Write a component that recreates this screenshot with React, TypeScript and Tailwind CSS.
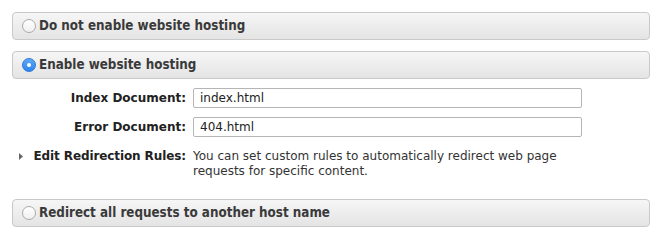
import React from "react";

function Radio({ checked }: { checked?: boolean }) {
  if (checked) {
    return (
      <span className="w-[14px] h-[14px] rounded-full bg-gradient-to-b from-[#5fa9f6] to-[#2b84ee] border border-[#2a7ad8] flex items-center justify-center shrink-0">
        <span className="w-[4px] h-[4px] rounded-full bg-white" />
      </span>
    );
  }
  return (
    <span className="w-[14px] h-[14px] rounded-full bg-gradient-to-b from-[#ffffff] to-[#f0f0f0] border border-[#a9a9a9] shrink-0" />
  );
}

function Bar({ label, checked }: { label: string; checked?: boolean }) {
  return (
    <div className="h-[28px] rounded-[4px] border border-[#c9c9c9] bg-gradient-to-b from-[#f6f6f6] to-[#e4e4e4] flex items-center pl-[9px] gap-[3px]">
      <Radio checked={checked} />
      <span className="text-[13.3px] font-bold text-[#3a3a3a] leading-none font-['DejaVu_Sans_Condensed',sans-serif]">{label}</span>
    </div>
  );
}

export default function App() {
  return (
    <div className="w-[655px] h-[251px] bg-white pt-[12px] pl-[12px] pr-[5px] font-['DejaVu_Sans',Verdana,sans-serif]">
      <Bar label="Do not enable website hosting" />
      <div className="mt-[11px]">
        <Bar label="Enable website hosting" checked />
      </div>
      <div className="mt-[9px] flex flex-col">
        <div className="flex items-center h-[20px]">
          <div className="w-[174px] text-right text-[12px] font-bold text-[#222]">Index Document:</div>
          <div className="ml-[7px] w-[389px] h-[20px] border border-[#b5b5b5] rounded-[2px] flex items-center pl-[6px] text-[12px] text-[#222]">
            index.html
          </div>
        </div>
        <div className="flex items-center h-[20px] mt-[9px]">
          <div className="w-[174px] text-right text-[12px] font-bold text-[#222]">Error Document:</div>
          <div className="ml-[7px] w-[389px] h-[20px] border border-[#b5b5b5] rounded-[2px] flex items-center pl-[6px] text-[12px] text-[#222]">
            404.html
          </div>
        </div>
        <div className="flex items-start mt-[12px]">
          <div className="w-[174px] flex items-center justify-end h-[15px]">
            <svg width="4" height="7" viewBox="0 0 4 7" className="mr-[10px]">
              <path d="M0 0 L4 3.5 L0 7 Z" fill="#666" />
            </svg>
            <span className="text-[12px] font-bold text-[#222] leading-[15px] tracking-[-0.1px]">Edit Redirection Rules:</span>
          </div>
          <div className="ml-[7px] w-[380px] text-[12px] text-[#333] leading-[15px]">
            You can set custom rules to automatically redirect web page requests for specific content.
          </div>
        </div>
      </div>
      <div className="mt-[20px]">
        <Bar label="Redirect all requests to another host name" />
      </div>
    </div>
  );
}
